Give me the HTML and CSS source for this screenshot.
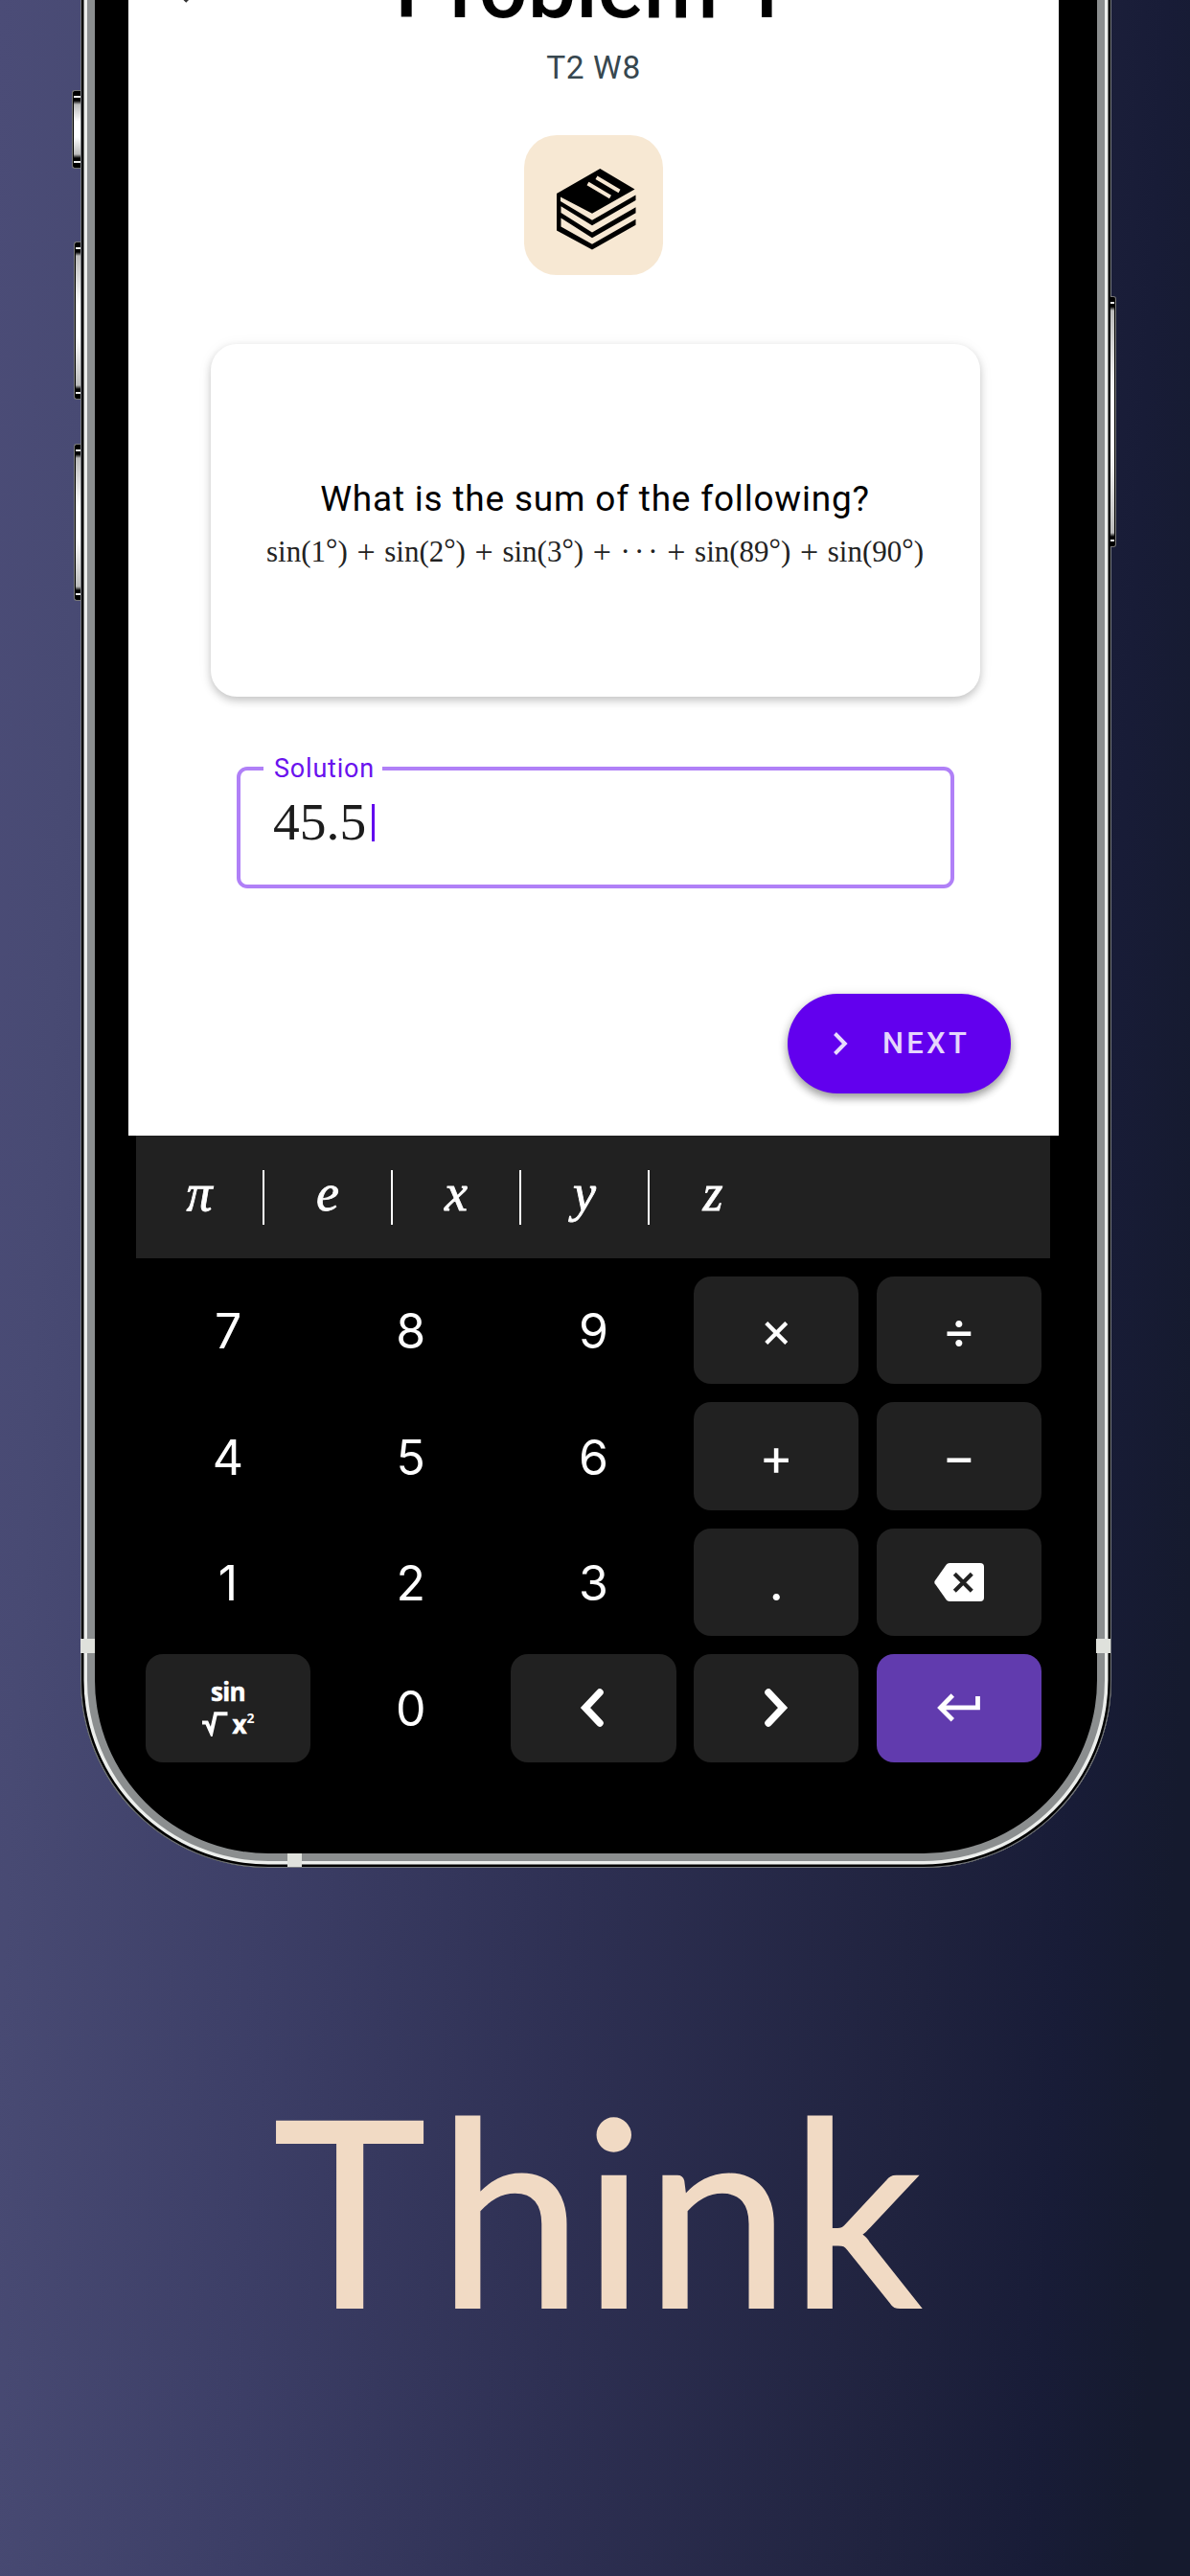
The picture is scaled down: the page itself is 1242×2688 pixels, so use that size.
FILE: index.html
```html
<!DOCTYPE html>
<html lang="en">
<head>
<meta charset="utf-8">
<title>Think</title>
<link rel="stylesheet" href="styles.css">
</head>
<body>
<main class="page">
  <div class="phone">
    <i class="side side-mute"></i>
    <i class="side side-up"></i>
    <i class="side side-down"></i>
    <i class="side side-power"></i>
    <i class="band band-left"></i>
    <i class="band band-right"></i>
    <i class="band band-bottom"></i>

    <section class="screen">
      <svg class="back" viewBox="0 0 48 48"><path d="M44 24H8M26 6L8 24l18 18" fill="none" stroke="#333" stroke-width="5"/></svg>
      <h1 class="title">Problem 1</h1>
      <p class="subtitle">T2 W8</p>
      <div class="tile">
        <svg width="84" height="86" viewBox="580 174 84 86">
          <path d="M626.3 175L662.5 196.5 618 221.8 585 204.500V209L618 228.800 663.500 202.500V208L618 234.300 585.500 214.200V221L618 241.500 663.500 215.300V221.300L618 247.300 585.500 226.500V235.500L618 253.700 663.500 227.800V233.800L618 259.500 581 239.500V201z"/>
          <path d="M622.500 184.300l24 14.200M613.500 190.500l23.500 14" stroke="#f7e8d3" stroke-width="3.900"/>
        </svg>
      </div>
      <article class="card">
        <p class="question">What is the sum of the following?</p>
        <p class="formula"><span>sin(1<i>°</i>)</span><b>+</b><span>sin(2<i>°</i>)</span><b>+</b><span>sin(3<i>°</i>)</span><b>+</b><span class="dots">···</span><b>+</b><span>sin(89<i>°</i>)</span><b>+</b><span>sin(90<i>°</i>)</span></p>
      </article>
      <div class="field">
        <span class="label">Solution</span>
        <span class="value">45.5</span><i class="caret"></i>
      </div>
      <button class="next">
        <svg width="16" height="26" viewBox="0 0 16 26"><path d="M2.500 2.500L12.800 13 2.500 23.500" fill="none" stroke="#e9dcfd" stroke-width="4"/></svg>
        <span>NEXT</span>
      </button>
    </section>

    <section class="keyboard">
      <div class="vars"><span>π</span><span>e</span><span>x</span><span>y</span><span>z</span></div>
      <div class="keys">
        <span class="key num">7</span><span class="key num">8</span><span class="key num">9</span><span class="key op times">×</span><span class="key op">÷</span>
        <span class="key num">4</span><span class="key num">5</span><span class="key num">6</span><span class="key op">+</span><span class="key op">−</span>
        <span class="key num">1</span><span class="key num">2</span><span class="key num">3</span><span class="key op point">.</span>
        <span class="key"><svg width="52" height="40" viewBox="0 0 52 40"><path d="M16 0H48Q52 0 52 4V36Q52 40 48 40H16Q13.800 40 12.600 38.300L.6 21.200Q0 20 .6 18.800L12.600 1.700Q13.800 0 16 0z" fill="#fff"/><path d="M21.300 11.300L39.300 29.300M39.300 11.300L21.300 29.300" stroke="#212121" stroke-width="4.200"/></svg></span>
        <span class="key fn"><span class="sin">sin</span><span class="root"><svg width="27" height="26" viewBox="0 0 27 26"><path d="M0 11.500H4.800L9.500 22 14 2.200H26.500" fill="none" stroke="#fff" stroke-width="4"/></svg>x<sup>2</sup></span></span>
        <span class="key num">0</span>
        <span class="key left"><svg width="26" height="42" viewBox="0 0 26 42"><path d="M21 5L6 21 21 37" fill="none" stroke="#fff" stroke-width="7.500" stroke-linecap="round"/></svg></span>
        <span class="key"><svg width="26" height="42" viewBox="0 0 26 42"><path d="M5 5L20 21 5 37" fill="none" stroke="#fff" stroke-width="7.500" stroke-linecap="round"/></svg></span>
        <span class="key enter"><svg width="46" height="30" viewBox="0 0 46 30"><path d="M42.500 3V14.800H4M16.300 2L3.500 15 16.300 27.800" fill="none" stroke="#fff" stroke-width="4.800"/></svg></span>
      </div>
    </section>
  </div>
  <h2 class="slogan"><span class="initial">T</span>hink</h2>
</main>
</body>
</html>
```
FILE: styles.css
```css
* { box-sizing: border-box; }
body { margin: 0; font-family: Roboto, sans-serif; }
h1, h2, p { margin: 0; font-weight: 400; }

.page {
  width: 1242px;
  height: 2688px;
  overflow: hidden;
  background: linear-gradient(93deg, #4b4c77 0%, #484a73 8%, #3c3e66 28%, #2e3053 51%, #20233f 76%, #181c37 88%, #151a2e 96%);
}

/* Phone body: outline, rim, polished edge, bezel */
.phone {
  position: relative;
  width: 1076px;
  height: 2009px;
  margin: -60px 0 0 84px;
  padding: 0 55px 0 50px;
  background: #000;
  border-radius: 0 0 196px 196px;
  box-shadow: inset 0 0 0 1px #777b80, inset 0 0 0 3.500px #000, inset 0 0 0 7px #eceeec, inset 0 0 0 15px #8b8e8f;
}
.side {
  position: absolute;
  left: -7px;
  width: 7px;
  border: 1px solid #777;
  border-right: 0;
  border-radius: 3px 0 0 3px;
  background: linear-gradient(#000 0 5px, #eee 5px 7px, #000 7px 10px, #bbb 14px, #fff 40% 60%, #bbb calc(100% - 14px), #000 calc(100% - 10px) calc(100% - 7px), #eee calc(100% - 7px) calc(100% - 5px), #000 calc(100% - 5px));
  box-shadow: inset 1px 0 #000;
}
.side-mute { top: 154px; height: 82px; left: -9px; width: 9px; }
.side-up { top: 312px; height: 165px; }
.side-down { top: 523px; height: 164px; }
.side-power { top: 369px; height: 262px; left: 1075px; width: 6px; transform: scaleX(-1); }
.band { position: absolute; background: #dfe1dc; }
.band-left, .band-right { top: 1770px; width: 15px; height: 15px; left: 0; }
.band-right { left: 1060px; }
.band-bottom { left: 216px; top: 1994px; width: 15px; height: 14px; }

.screen {
  position: relative;
  height: 1245px;
  padding-top: 4px;
  background: #fff;
  display: flex;
  flex-direction: column;
  align-items: center;
}
.back { position: absolute; left: 36px; top: 19px; width: 48px; height: 48px; }
.title { font-size: 89.500px; line-height: 88px; font-weight: 500; color: #000; padding-right: 4px; }
.subtitle { margin-top: 19px; font-size: 33.500px; line-height: 40px; letter-spacing: .6px; color: #37474f; }
.tile {
  margin-top: 50px;
  width: 145px;
  height: 146px;
  border-radius: 34px;
  background: #f7e8d3;
  display: flex;
  align-items: center;
  justify-content: center;
  padding-top: 7px;
  padding-left: 4px;
}
.card {
  margin: 72px 0 0 3px;
  width: 803px;
  height: 368px;
  padding-top: 140px;
  border-radius: 27px;
  background: #fff;
  box-shadow: 0 4px 9px rgba(0,0,0,.2), 0 2px 16px rgba(0,0,0,.06);
  text-align: center;
}
.question { font-size: 37px; line-height: 44px; letter-spacing: .800px; color: #000; }
.formula {
  margin: 13px auto 0;
  width: 686px;
  display: flex;
  justify-content: space-between;
  font: 31px/40px "Liberation Serif", serif;
  color: #222;
}
.formula b { font-weight: 400; font-size: 34px; }
.formula i { font-style: normal; line-height: 0; vertical-align: 2px; }
.dots { letter-spacing: 4px; margin-right: -4px; }

.field {
  position: relative;
  margin: 73px 0 0 4px;
  width: 749px;
  height: 127px;
  padding: 24px 0 0 34px;
  border: 4px solid #b080f7;
  border-radius: 11px;
  display: flex;
}
.label {
  position: absolute;
  left: 24px;
  top: -17px;
  width: 124px;
  padding-left: 11px;
  background: #fff;
  font-size: 27px;
  line-height: 30px;
  letter-spacing: .8px;
  color: #6a12ee;
}
.value { font: 55.500px/60px "Liberation Serif", serif; color: #1c1c1c; }
.caret { width: 3px; height: 39px; margin: 11px 0 0 6px; background: #6200ee; }

.next {
  align-self: flex-end;
  margin: 110px 50px 0 0;
  width: 233px;
  height: 104px;
  padding: 0 0 0 47px;
  border: 0;
  border-radius: 52px;
  background: #6200ee;
  box-shadow: 0 5px 8px rgba(0,0,0,.32), 0 2px 12px rgba(0,0,0,.14);
  display: flex;
  align-items: center;
  gap: 36px;
  font: 500 31px/40px Roboto, sans-serif;
  letter-spacing: 3.300px;
  color: #e5d6fc;
}

.keyboard { margin-left: 8px; width: 954px; }
.vars { height: 128px; display: flex; align-items: center; background: #212121; }
.vars span {
  width: 134px;
  height: 57px;
  border-right: 2px solid #fff;
  text-align: center;
  font: italic 54px/49px "Liberation Serif", serif;
  color: #fff;
  -webkit-text-stroke: .8px #fff;
}
.vars span:last-child { border-color: transparent; }
.keys {
  padding: 19px 9px 0 10px;
  display: grid;
  grid-template-columns: repeat(5, 1fr);
  grid-auto-rows: 112.400px;
  gap: 19px 18.700px;
}
.key {
  display: flex;
  align-items: center;
  justify-content: center;
  border-radius: 18px;
  background: #212121;
  color: #fff;
}
.num { background: none; font: 50px/60px Inter, sans-serif; padding-top: 2px; }
.op { font: 54px/60px Inter, sans-serif; }
.times { font-size: 52px; }
.left { padding-right: 2px; }
.enter { background: #613bae; }
.fn { flex-direction: column; font: 700 26px/34px "Open Sans", sans-serif; }
.sin { letter-spacing: -.6px; -webkit-text-stroke: .5px #fff; }
.root { display: flex; align-items: center; height: 34px; gap: 5px; -webkit-text-stroke: .6px #fff; }
.root sup { font-size: 14px; line-height: 14px; margin: -12px 0 0 -5px; -webkit-text-stroke: 0; }

.slogan {
  margin: 195px 0 0 285px;
  font: 271px/320px Lato, sans-serif;
  color: #f1dac4;
  -webkit-text-stroke: 2px #f1dac4;
}
.initial { margin-right: 12px; }
```
